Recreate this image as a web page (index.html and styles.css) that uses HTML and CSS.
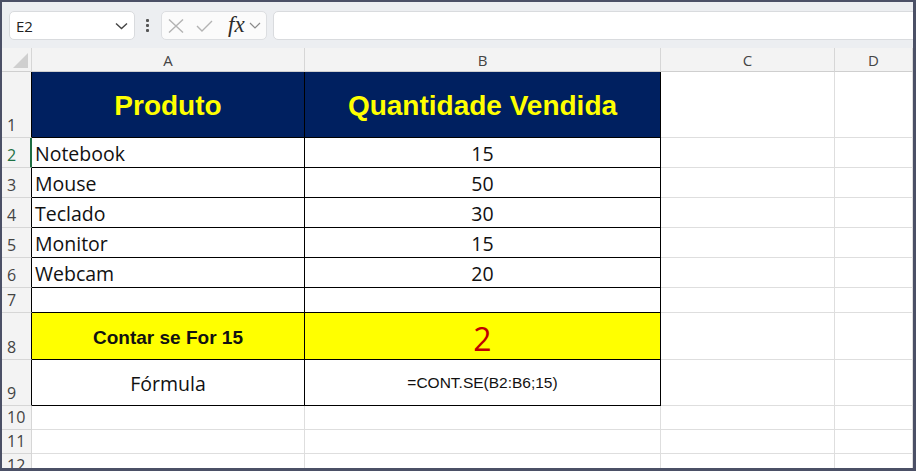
FILE: index.html
```html
<!DOCTYPE html>
<html lang="pt">
<head>
<meta charset="utf-8">
<title>Planilha</title>
<link rel="stylesheet" href="styles.css">
</head>
<body>
<div class="frame">
  <div class="toolbar">
    <div class="namebox">
      <span class="ref">E2</span>
      <svg class="chev" width="13" height="8" viewBox="0 0 13 8"><path d="M1 1.5 L6.5 6.5 L12 1.5" fill="none" stroke="#444" stroke-width="1.4"/></svg>
    </div>
    <div class="dots"><i></i><i></i><i></i></div>
    <div class="fbtns">
      <svg class="ic-x" width="16" height="14" viewBox="0 0 16 14"><path d="M1 0.5 L15 13.5 M15 0.5 L1 13.5" fill="none" stroke="#b3b3b3" stroke-width="1.4"/></svg>
      <svg class="ic-ok" width="17" height="12" viewBox="0 0 17 12"><path d="M1 6 L6 11 L16 1" fill="none" stroke="#b3b3b3" stroke-width="1.4"/></svg>
      <span class="fx">fx</span>
      <svg class="ic-dd" width="12" height="7" viewBox="0 0 12 7"><path d="M1 1 L6 6 L11 1" fill="none" stroke="#8a8a8a" stroke-width="1.2"/></svg>
    </div>
    <div class="formula"></div>
  </div>

  <div class="sheet">
    <div class="corner"><span class="tri"></span></div>
    <div class="colh">A</div>
    <div class="colh">B</div>
    <div class="colh">C</div>
    <div class="colh">D</div>

    <div class="rowh tb"><span>1</span></div>
    <div class="c t hd">Produto</div>
    <div class="c t hd">Quantidade Vendida</div>
    <div class="c"></div>
    <div class="c"></div>

    <div class="rowh sel"><span>2</span></div>
    <div class="c t txt">Notebook</div>
    <div class="c t num">15</div>
    <div class="c"></div>
    <div class="c"></div>

    <div class="rowh tb"><span>3</span></div>
    <div class="c t txt">Mouse</div>
    <div class="c t num">50</div>
    <div class="c"></div>
    <div class="c"></div>

    <div class="rowh tb"><span>4</span></div>
    <div class="c t txt">Teclado</div>
    <div class="c t num">30</div>
    <div class="c"></div>
    <div class="c"></div>

    <div class="rowh tb"><span>5</span></div>
    <div class="c t txt">Monitor</div>
    <div class="c t num">15</div>
    <div class="c"></div>
    <div class="c"></div>

    <div class="rowh tb"><span>6</span></div>
    <div class="c t txt">Webcam</div>
    <div class="c t num">20</div>
    <div class="c"></div>
    <div class="c"></div>

    <div class="rowh tb"><span>7</span></div>
    <div class="c t"></div>
    <div class="c t"></div>
    <div class="c"></div>
    <div class="c"></div>

    <div class="rowh tb"><span>8</span></div>
    <div class="c t yl label">Contar se For 15</div>
    <div class="c t yl result">2</div>
    <div class="c"></div>
    <div class="c"></div>

    <div class="rowh tb"><span>9</span></div>
    <div class="c t num">Fórmula</div>
    <div class="c t fml">=CONT.SE(B2:B6;15)</div>
    <div class="c"></div>
    <div class="c"></div>

    <div class="rowh"><span>10</span></div>
    <div class="c"></div>
    <div class="c"></div>
    <div class="c"></div>
    <div class="c"></div>

    <div class="rowh"><span>11</span></div>
    <div class="c"></div>
    <div class="c"></div>
    <div class="c"></div>
    <div class="c"></div>

    <div class="rowh"><span>12</span></div>
    <div class="c"></div>
    <div class="c"></div>
    <div class="c"></div>
    <div class="c"></div>
  </div>
</div>
</body>
</html>
```

FILE: styles.css
```css
* { box-sizing: border-box; }

html, body {
  margin: 0;
  padding: 0;
  background: #ffffff;
}

.frame {
  width: 916px;
  height: 471px;
  border-style: solid;
  border-color: #4b5066;
  border-width: 2px 3px 3px 2px;
  overflow: hidden;
  display: flex;
  flex-direction: column;
  font-family: "Open Sans", "Noto Sans", sans-serif;
}

/* ---------- toolbar ---------- */
.toolbar {
  height: 46px;
  flex: none;
  background: #eceef1;
  display: flex;
  align-items: flex-start;
  padding: 9px 0 0 7px;
  overflow: hidden;
}

.namebox {
  width: 126px;
  height: 29px;
  background: #ffffff;
  border: 1px solid #d9dbde;
  border-radius: 5px;
  display: flex;
  align-items: center;
  padding: 0 6px 0 6px;
}

.ref {
  font-size: 15px;
  color: #222;
  flex: 1;
}

.chev { display: block; }

.dots {
  margin-left: 11px;
  height: 29px;
  display: flex;
  flex-direction: column;
  justify-content: center;
  gap: 2px;
}

.dots i {
  display: block;
  width: 3px;
  height: 3px;
  background: #555;
  border-radius: 1px;
}

.fbtns {
  margin-left: 12px;
  width: 106px;
  height: 29px;
  background: #fbfbfb;
  border: 1px solid #dcdee1;
  border-radius: 5px;
  display: flex;
  align-items: center;
  padding-left: 6px;
}

.ic-x { display: block; }
.ic-ok { display: block; margin-left: 12px; }

.fx {
  margin-left: 15px;
  font-family: "Liberation Serif", "DejaVu Serif", serif;
  font-style: italic;
  font-size: 23px;
  color: #2b2b2b;
  line-height: 1;
  margin-top: -3px;
}

.ic-dd { display: block; margin-left: 4px; }

.formula {
  margin-left: 6px;
  margin-right: -8px;
  flex: 1;
  height: 29px;
  background: #ffffff;
  border: 1px solid #d9dbde;
  border-radius: 5px;
}

/* ---------- sheet ---------- */
.sheet {
  flex: 1;
  display: grid;
  grid-template-columns: 30px 273px 356px 174px 1fr;
  grid-template-rows: 24px 66px 30px 30px 30px 30px 30px 25px 47px 46px 24px 24px 24px;
  overflow: hidden;
}

.corner {
  background: #f3f3f3;
  border-right: 1px solid #d6d6d6;
  border-bottom: 1px solid #cfcfcf;
  display: flex;
  justify-content: flex-end;
  align-items: flex-end;
  padding: 0 3px 3px 0;
}

.tri {
  width: 0;
  height: 0;
  border-left: 15px solid transparent;
  border-bottom: 15px solid #cfcfcf;
}

.colh {
  background: #f3f3f3;
  border-right: 1px solid #d6d6d6;
  border-bottom: 1px solid #cfcfcf;
  display: flex;
  align-items: center;
  justify-content: center;
  font-size: 15px;
  color: #444;
}

.rowh {
  background: #f3f3f3;
  border-right: 1px solid #d6d6d6;
  border-bottom: 1px solid #d6d6d6;
  display: flex;
  align-items: flex-end;
  padding: 0 0 1px 5px;
  font-size: 16px;
  color: #444;
}

.rowh.tb { border-right-color: #000; }

.rowh.sel {
  border-right: 2px solid #1e6e42;
  color: #1e7145;
}

.c {
  border-right: 1px solid #dedede;
  border-bottom: 1px solid #dedede;
  display: flex;
  align-items: center;
  color: #111;
}

.c.t {
  border-right-color: #000;
  border-bottom-color: #000;
}

.hd {
  background: #002060;
  color: #ffff00;
  font-family: "Liberation Sans", Arial, sans-serif;
  font-weight: bold;
  font-size: 28px;
  justify-content: center;
  padding-top: 2px;
}

.txt {
  font-size: 19.5px;
  padding: 2px 0 0 3px;
}

.num {
  font-size: 19.5px;
  justify-content: center;
  padding-top: 2px;
}

.yl { background: #ffff00; }

.label {
  font-family: "Liberation Sans", Arial, sans-serif;
  font-weight: bold;
  font-size: 19px;
  justify-content: center;
  padding-top: 3px;
}

.result {
  font-size: 32px;
  color: #c00000;
  justify-content: center;
  padding-top: 4px;
}

.fml {
  font-family: "Liberation Sans", Arial, sans-serif;
  font-size: 15.5px;
  justify-content: center;
}
```
